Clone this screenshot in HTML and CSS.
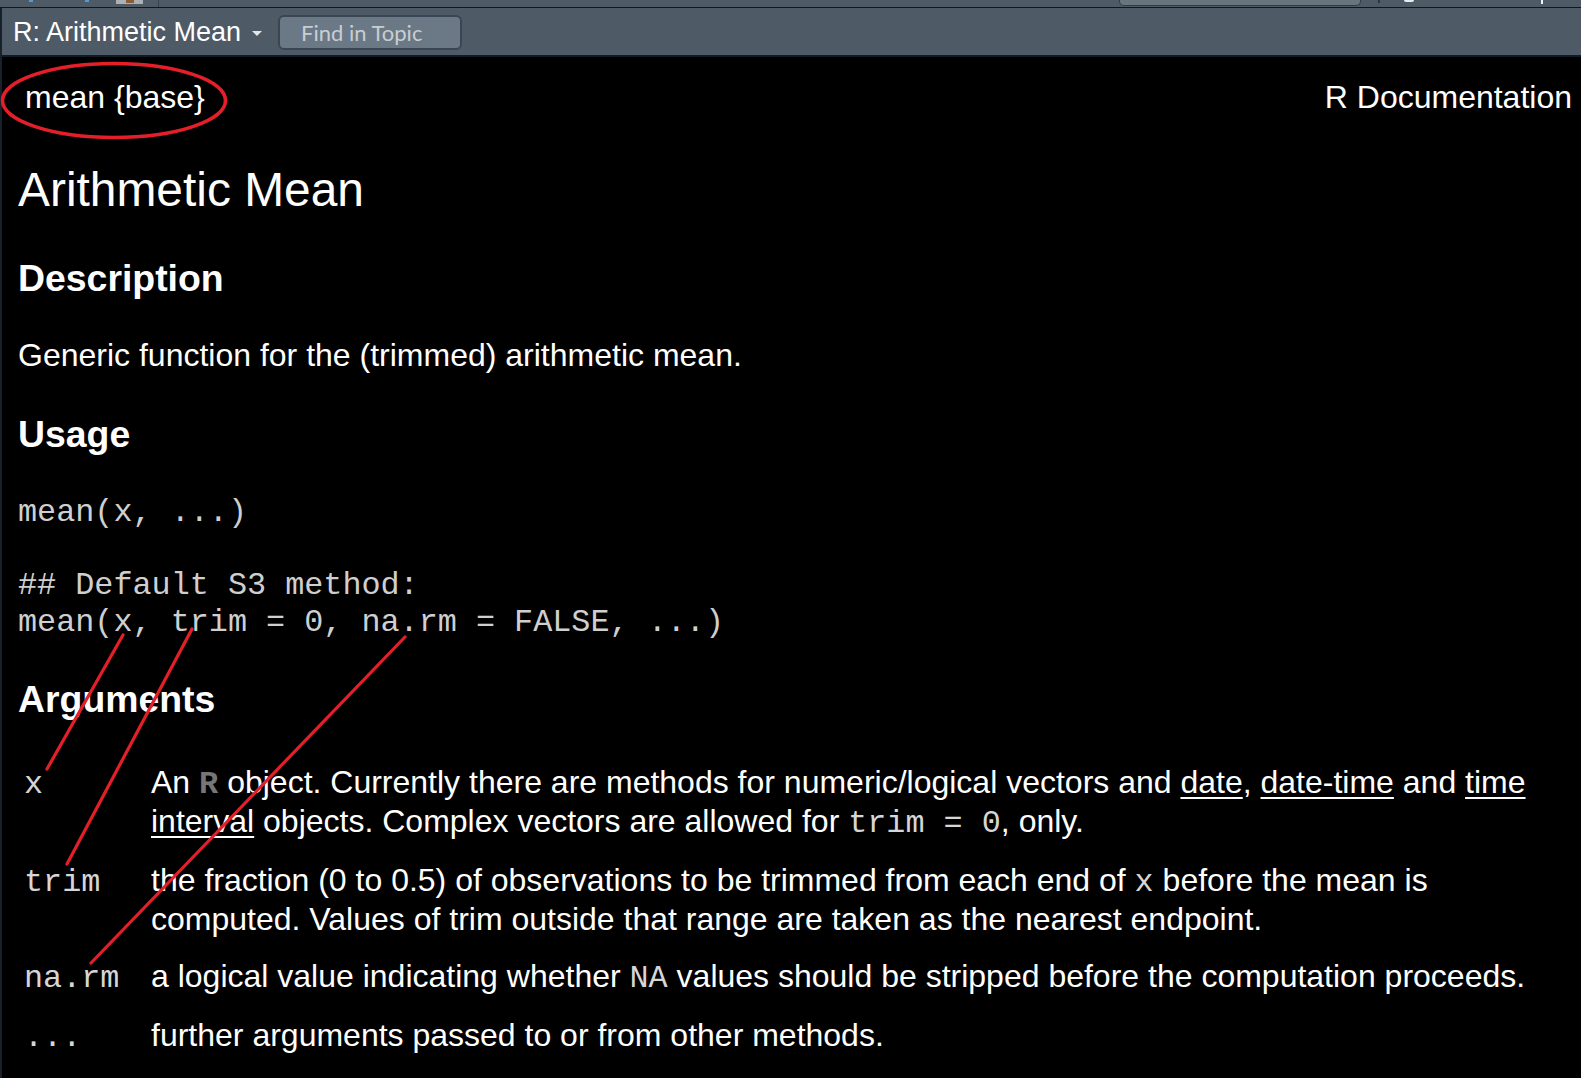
FILE: index.html
```html
<!DOCTYPE html>
<html lang="en">
<head>
<meta charset="utf-8">
<title>R: Arithmetic Mean</title>
<link rel="stylesheet" href="styles.css">
</head>
<body>
<div class="topstrip">
  <span class="ts-dot ts-dot1"></span>
  <span class="ts-dot ts-dot2"></span>
  <span class="ts-icon"><span class="ts-icon-in"></span></span>
  <span class="ts-sep"></span>
  <span class="ts-search"></span>
  <span class="ts-mark"></span>
  <span class="ts-round"></span>
  <span class="ts-tick"></span>
</div>
<div class="pane">
  <div class="pane-bar">
    <span class="pane-title">R: Arithmetic Mean</span>
    <span class="caret"></span>
    <span class="find-box">Find in Topic</span>
  </div>
  <div class="doc">
    <div class="doc-head">
      <span class="doc-pkg">mean {base}</span>
      <span>R Documentation</span>
    </div>
    <h2 class="title">Arithmetic Mean</h2>
    <h3 class="sect sect-first">Description</h3>
    <p class="para">Generic function for the (trimmed) arithmetic mean.</p>
    <h3 class="sect">Usage</h3>
<pre class="usage">mean(x, ...)

## Default S3 method:
mean(x, trim = 0, na.rm = FALSE, ...)</pre>
    <h3 class="sect sect-args">Arguments</h3>
    <div class="args">
      <div class="arg-name"><code class="code">x</code></div>
      <div class="arg-desc">An <span class="rlang">R</span> object. Currently there are methods for numeric/logical vectors and <a href="#">date</a>, <a href="#">date-time</a> and <a href="#">time interval</a> objects. Complex vectors are allowed for <code class="code">trim = 0</code>, only.</div>
      <div class="arg-name arg-tight"><code class="code">trim</code></div>
      <div class="arg-desc arg-tight">the fraction (0 to 0.5) of observations to be trimmed from each end of <code class="code">x</code> before the mean is computed. Values of trim outside that range are taken as the nearest endpoint.</div>
      <div class="arg-name"><code class="code">na.rm</code></div>
      <div class="arg-desc">a logical value indicating whether <code class="code">NA</code> values should be stripped before the computation proceeds.</div>
      <div class="arg-name"><code class="code">...</code></div>
      <div class="arg-desc">further arguments passed to or from other methods.</div>
    </div>
  </div>
</div>
<svg class="annot" width="1581" height="1078" viewBox="0 0 1581 1078">
  <ellipse cx="114" cy="100.5" rx="111.5" ry="37" fill="none" stroke="#e51f29" stroke-width="3.5"/>
  <line x1="123" y1="635" x2="47" y2="769" stroke="#e51f29" stroke-width="3.2" stroke-linecap="round"/>
  <line x1="192" y1="629" x2="67" y2="864" stroke="#e51f29" stroke-width="3.2" stroke-linecap="round"/>
  <line x1="405" y1="637" x2="91" y2="963" stroke="#e51f29" stroke-width="3.2" stroke-linecap="round"/>
</svg>
</body>
</html>
```
FILE: styles.css
```css
* { box-sizing: border-box; }
html, body { margin: 0; padding: 0; background: #000; }
body {
  width: 1581px;
  height: 1078px;
  overflow: hidden;
  position: relative;
  font-family: "Liberation Sans", Arial, sans-serif;
}

/* top toolbar strip (mostly cut off) */
.topstrip {
  height: 8px;
  background: #4e5a65;
  border-bottom: 1px solid #0e1923;
  display: flex;
  align-items: flex-start;
  overflow: hidden;
}
.ts-dot { width: 4px; height: 2px; background: #4aa0dc; }
.ts-dot1 { margin-left: 29px; }
.ts-dot2 { margin-left: 52px; }
.ts-icon {
  margin-left: 27px;
  width: 27px;
  height: 4px;
  background: #a9b0b6;
  display: flex;
  justify-content: center;
}
.ts-icon-in { width: 8px; height: 3px; background: #8b5b33; }
.ts-sep { margin-left: 15px; width: 1px; height: 7px; background: #36424d; }
.ts-search {
  margin-left: 960px;
  width: 242px;
  height: 6px;
  background: #68757f;
  border: 1px solid #2f3b46;
  border-top: none;
  border-radius: 0 0 5px 5px;
}
.ts-mark { margin-left: 17px; width: 2px; height: 3px; background: #2c3741; }
.ts-round { margin-left: 24px; width: 10px; height: 2px; background: #e8ecef; border-radius: 0 0 5px 5px; }
.ts-tick { margin-left: 127px; width: 2px; height: 4px; background: #f2f4f6; }

/* pane */
.pane {
  border-left: 2px solid #16212c;
  height: 1070px;
}
.pane-bar {
  height: 49px;
  background: #4e5b66;
  border-bottom: 2px solid #0f1a25;
  display: flex;
  align-items: center;
  padding-left: 11px;
}
.pane-title {
  color: #fff;
  font-size: 27px;
  line-height: 30px;
}
.caret {
  margin-left: 11px;
  margin-top: 3px;
  width: 0;
  height: 0;
  border-left: 5px solid transparent;
  border-right: 5px solid transparent;
  border-top: 5px solid #e2e6e9;
}
.find-box {
  margin-left: 16px;
  width: 184px;
  height: 35px;
  background: #6b7885;
  border: 2px solid #3a4653;
  border-radius: 6px;
  color: #c9ced3;
  font-family: Lato, "Open Sans", sans-serif;
  font-size: 22px;
  line-height: 31px;
  padding-left: 21px;
  margin-top: 1px;
}

/* documentation */
.doc {
  padding: 21px 9px 0 16px;
  color: #fff;
  font-size: 32px;
  line-height: 39px;
}
.doc-head {
  display: flex;
  justify-content: space-between;
  line-height: 38px;
}
.doc-pkg { padding-left: 7px; }
.title {
  margin: 46px 0 0;
  font-size: 47.9px;
  font-weight: normal;
  line-height: 56px;
}
.sect {
  margin: 37.5px 0 0;
  font-size: 37.4px;
  line-height: 44px;
  font-weight: bold;
}
.sect-first { margin-top: 38px; }
.para {
  margin: 35.5px 0 0;
}
.usage {
  margin: 38.5px 0 0;
  font-family: "Liberation Mono", "Courier New", monospace;
  font-size: 31.8px;
  line-height: 36.7px;
  color: #cfcfcf;
}
.sect-args { margin-top: 35.5px; }

.args {
  margin-top: 32.5px;
  display: grid;
  grid-template-columns: 133px 1fr;
  align-items: baseline;
}
.arg-name {
  padding: 10px 0 10px 6px;
}
.arg-desc {
  padding: 10px 0;
}
.arg-tight { padding-bottom: 8px; }
.code {
  font-family: "Liberation Mono", "Courier New", monospace;
  font-size: 31.8px;
  line-height: 1;
  color: #d6d6d6;
}
.rlang {
  font-family: "Liberation Mono", "Courier New", monospace;
  font-weight: bold;
  color: #767676;
  line-height: 1;
}
.doc a {
  color: #fff;
  text-decoration: underline;
  text-decoration-thickness: 2px;
  text-underline-offset: 4px;
}

/* red annotation overlay */
.annot {
  position: absolute;
  top: 0;
  left: 0;
  pointer-events: none;
}
```
